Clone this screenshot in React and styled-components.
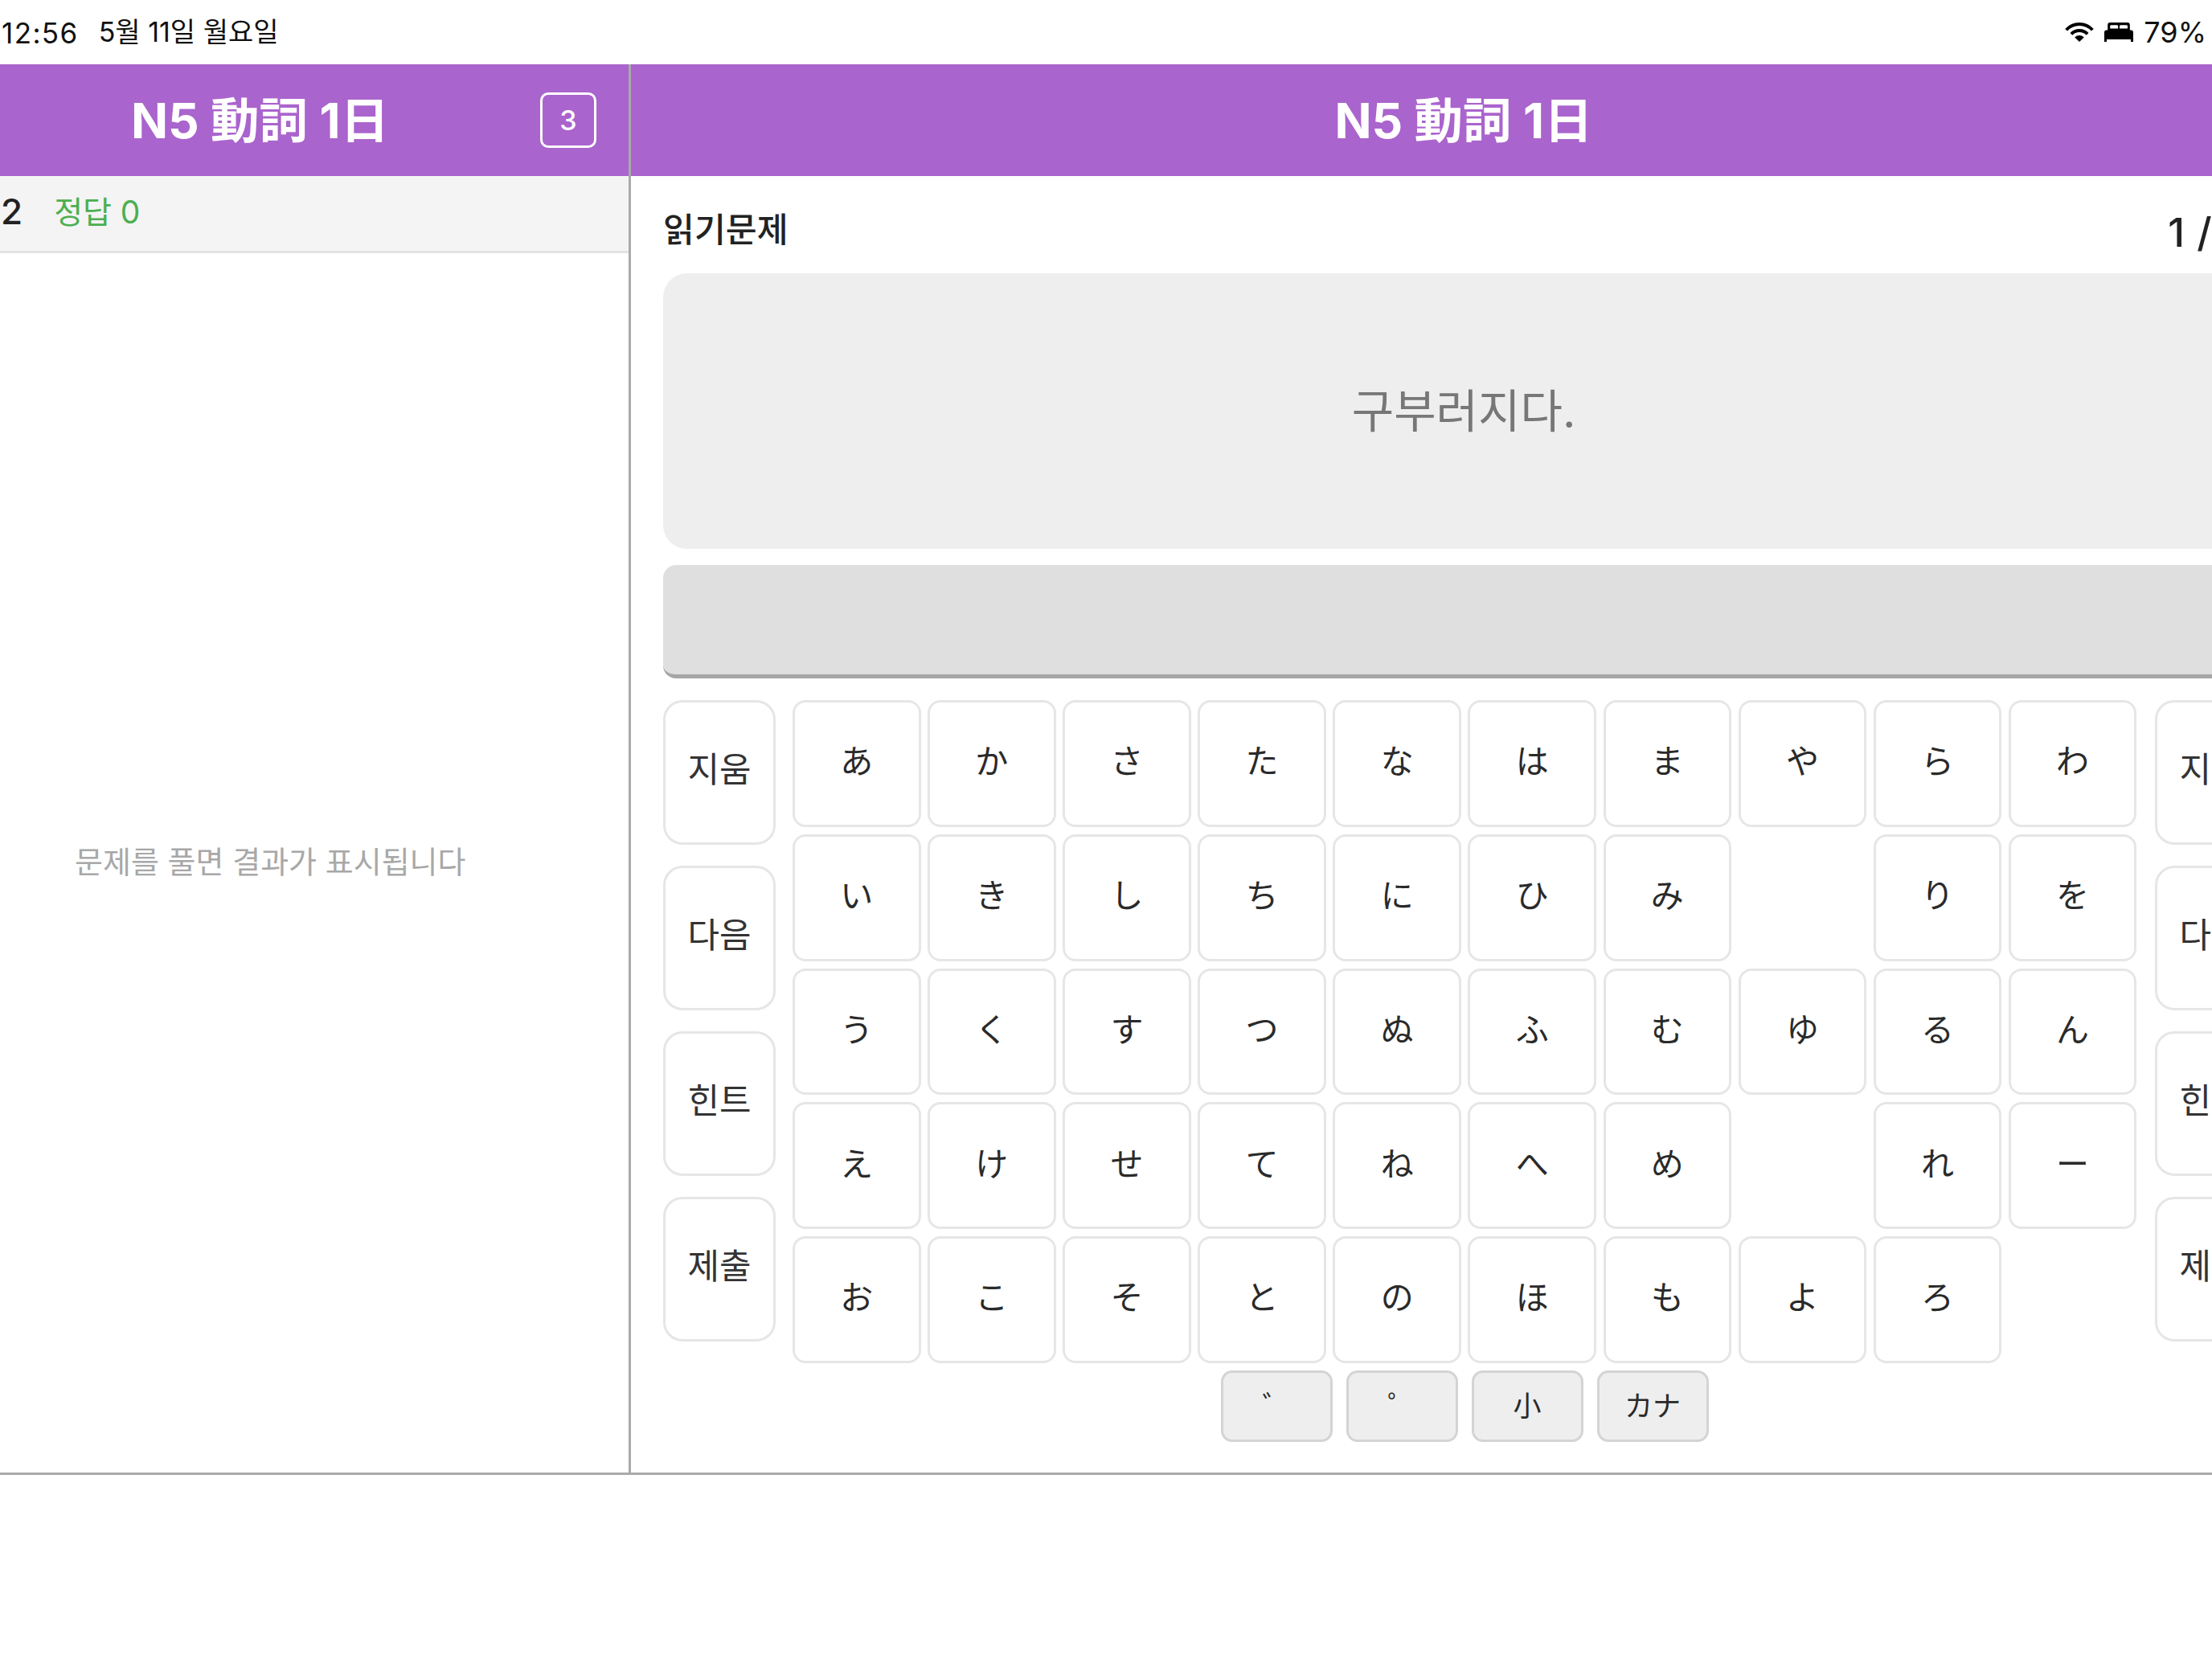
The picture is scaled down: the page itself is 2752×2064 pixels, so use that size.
import React from "react";
import styled, { createGlobalStyle } from "styled-components";

const Global = createGlobalStyle`
  html, body { margin: 0; padding: 0; width: 2752px; height: 2064px; overflow: hidden; background: #fff; }
  #root { width: 2752px; height: 2064px; overflow: hidden; }
  * { box-sizing: border-box; }
  body { font-family: "Inter", "Noto Sans CJK KR", sans-serif; color: #222; }
`;

const Page = styled.div`
  width: 2752px;
  height: 2064px;
  overflow: hidden;
  display: flex;
  flex-direction: column;
`;

const StatusBar = styled.div`
  height: 80px;
  flex: none;
  display: flex;
  align-items: center;
  justify-content: space-between;
  padding: 0 7px 0 2px;
  font-size: 35px;
  color: #111;
`;
const StatusLeft = styled.div`
  display: flex;
  align-items: center;
  gap: 25px;
`;
const Time = styled.span`
  letter-spacing: 1.4px;
  line-height: 1;
  position: relative;
  top: 1px;
`;
const DateText = styled.span`
  font-size: 34px;
  line-height: 1;
`;
const StatusRight = styled.div`
  display: flex;
  align-items: center;
  gap: 13px;
  font-size: 36px;
`;

const Columns = styled.div`
  height: 1755px;
  flex: none;
  display: flex;
  width: 2860px;
  border-bottom: 3px solid #aaa;
`;

const Aside = styled.aside`
  width: 785px;
  flex: none;
  border-right: 3px solid #aaa;
  display: flex;
  flex-direction: column;
`;

const Header = styled.header`
  height: 139px;
  flex: none;
  background: #aa64cd;
  color: #fff;
  display: flex;
  align-items: center;
  justify-content: center;
  position: relative;
  padding-bottom: 9px;
  font-size: 60.5px;
  font-weight: 700;
  font-family: "Inter", "Noto Sans CJK JP", sans-serif;
`;
const AsideHeader = styled(Header)`
  justify-content: flex-start;
  padding-left: 163px;
`;
const Badge = styled.div`
  position: absolute;
  left: 672px;
  top: 35px;
  width: 70px;
  height: 69px;
  border: 3px solid #fff;
  border-radius: 10px;
  display: flex;
  align-items: center;
  justify-content: center;
  font-size: 34px;
  font-weight: 500;
`;

const Stats = styled.div`
  height: 96px;
  flex: none;
  background: #f4f4f4;
  border-bottom: 3px solid #e4e4e4;
  display: flex;
  align-items: center;
  gap: 39px;
  padding: 0 0 6px 1px;
`;
const Total = styled.span`
  font-size: 44px;
  font-weight: 500;
  color: #222;
`;
const Correct = styled.span`
  font-size: 39px;
  color: #4caf50;
  position: relative;
  top: -2px;
`;

const Empty = styled.div`
  flex: 1;
  display: flex;
  align-items: center;
  padding: 0 0 8px 93px;
  font-size: 38px;
  color: #a8a8a8;
`;

const Panel = styled.main`
  width: 2072px;
  flex: none;
  display: flex;
  flex-direction: column;
`;
const Content = styled.div`
  flex: 1;
  padding: 0 40px;
  display: flex;
  flex-direction: column;
`;
const QuizHead = styled.div`
  height: 121px;
  flex: none;
  display: flex;
  align-items: center;
  justify-content: space-between;
  padding-top: 12px;
`;
const QuizType = styled.div`
  font-size: 42.3px;
  font-weight: 500;
  color: #222;
  position: relative;
  top: -3px;
`;
const QuizCount = styled.div`
  font-size: 50px;
  font-weight: 500;
  color: #222;
  white-space: pre;
  word-spacing: 2px;
  margin-right: 19px;
  position: relative;
  top: 3px;
`;
const Prompt = styled.div`
  height: 343px;
  flex: none;
  background: #eee;
  border-radius: 30px;
  display: flex;
  align-items: center;
  justify-content: center;
  padding-bottom: 10px;
  font-size: 57px;
  color: #777;
`;
const Answer = styled.div`
  height: 141px;
  flex: none;
  margin-top: 20px;
  background: #dfdfdf;
  border-bottom: 5px solid #a6a6a6;
  border-radius: 16px;
`;

const Keyboard = styled.div`
  width: 1996px;
  flex: none;
  margin-top: 27px;
  display: flex;
  flex-direction: column;
  gap: 9px;
`;
const KeyArea = styled.div`
  display: flex;
  gap: 22px;
  align-items: flex-start;
`;
const SideColumn = styled.div`
  width: 140px;
  flex: none;
  display: flex;
  flex-direction: column;
  gap: 26px;
`;
const SideKey = styled.div`
  height: 180px;
  border: 3px solid #e6e6e6;
  border-radius: 24px;
  background: #fff;
  display: flex;
  align-items: center;
  justify-content: center;
  padding-bottom: 15px;
  font-size: 43px;
  color: #333;
`;
const KanaGrid = styled.div`
  flex: 1;
  display: grid;
  margin-left: -1px;
  grid-template-columns: repeat(10, 159.5px);
  grid-auto-rows: 157.75px;
  column-gap: 8.6px;
  row-gap: 9px;
`;
const KanaKey = styled.div`
  border: ${(p) => (p.$blank ? "none" : "3px solid #e6e6e6")};
  border-radius: 16px;
  background: #fff;
  display: flex;
  align-items: center;
  justify-content: center;
  padding-bottom: 11px;
  font-family: "Noto Sans CJK JP", sans-serif;
  font-size: 41px;
  color: #2a2a2a;
`;
const ToolRow = styled.div`
  display: flex;
  justify-content: center;
  gap: 17px;
  margin-right: 2px;
`;
const ToolKey = styled.div`
  width: 139px;
  height: 89px;
  background: #eee;
  border: 3px solid #d4d4d4;
  border-radius: 14px;
  display: flex;
  align-items: center;
  justify-content: center;
  padding-bottom: 6px;
  font-family: "Noto Sans CJK JP", sans-serif;
  font-size: 35px;
  color: #2a2a2a;
`;

const rows = [
  "あかさたなはまやらわ",
  "いきしちにひみ　りを",
  "うくすつぬふむゆるん",
  "えけせてねへめ　れー",
  "おこそとのほもよろ　",
];
const sideKeys = ["지움", "다음", "힌트", "제출"];
const toolKeys = ["゛", "゜", "小", "カナ"];

const Wifi = () => (
  <svg width="36" height="24" viewBox="0 0 36 24" aria-hidden="true">
    <path d="M1.650 9.280A22 22 0 0 1 34.350 9.280" fill="none" stroke="#000" strokeWidth="4" />
    <path d="M7.930 14.270A14 14 0 0 1 28.070 14.270" fill="none" stroke="#000" strokeWidth="4" />
    <path d="M18 24L12.250 18.440A8 8 0 0 1 23.750 18.440Z" fill="#000" />
  </svg>
);
const Bed = () => (
  <svg width="36" height="24" viewBox="0 0 36 24" aria-hidden="true">
    <path
      fillRule="evenodd"
      d="M7 0h22c1.700 0 2.800 1.100 2.800 2.800V10H4.200V2.800C4.200 1.100 5.300 0 7 0zM7.200 7.400V4.800c0-1 .6-1.600 1.600-1.600h6.800c1 0 1.600.6 1.600 1.600v2.600zM19 7.400V4.800c0-1 .6-1.600 1.600-1.600h6.800c1 0 1.600.6 1.600 1.600v2.600z"
      fill="#000"
    />
    <path d="M2.500 9.500h31c1.400 0 2.500 1.100 2.500 2.500v12h-3v-3H3v3H0V12c0-1.400 1.100-2.500 2.500-2.500z" fill="#000" />
  </svg>
);

export default function App() {
  return (
    <Page>
      <Global />
      <StatusBar>
        <StatusLeft>
          <Time>12:56</Time>
          <DateText>5월 11일 월요일</DateText>
        </StatusLeft>
        <StatusRight>
          <Wifi />
          <Bed />
          <span>79%</span>
        </StatusRight>
      </StatusBar>
      <Columns>
        <Aside>
          <AsideHeader>
            N5 動詞 1日
            <Badge>3</Badge>
          </AsideHeader>
          <Stats>
            <Total>2</Total>
            <Correct>정답 0</Correct>
          </Stats>
          <Empty>문제를 풀면 결과가 표시됩니다</Empty>
        </Aside>
        <Panel>
          <Header>N5 動詞 1日</Header>
          <Content>
            <QuizHead>
              <QuizType>읽기문제</QuizType>
              <QuizCount>1 / 2</QuizCount>
            </QuizHead>
            <Prompt>구부러지다.</Prompt>
            <Answer />
            <Keyboard>
              <KeyArea>
                <SideColumn>
                  {sideKeys.map((k) => (
                    <SideKey key={k}>{k}</SideKey>
                  ))}
                </SideColumn>
                <KanaGrid>
                  {rows.flatMap((row, r) =>
                    [...row].map((c, i) => (
                      <KanaKey key={`${r}-${i}`} $blank={c === "　"}>
                        {c === "　" ? "" : c}
                      </KanaKey>
                    ))
                  )}
                </KanaGrid>
                <SideColumn>
                  {sideKeys.map((k) => (
                    <SideKey key={k}>{k}</SideKey>
                  ))}
                </SideColumn>
              </KeyArea>
              <ToolRow>
                {toolKeys.map((k) => (
                  <ToolKey key={k}>{k}</ToolKey>
                ))}
              </ToolRow>
            </Keyboard>
          </Content>
        </Panel>
      </Columns>
    </Page>
  );
}
